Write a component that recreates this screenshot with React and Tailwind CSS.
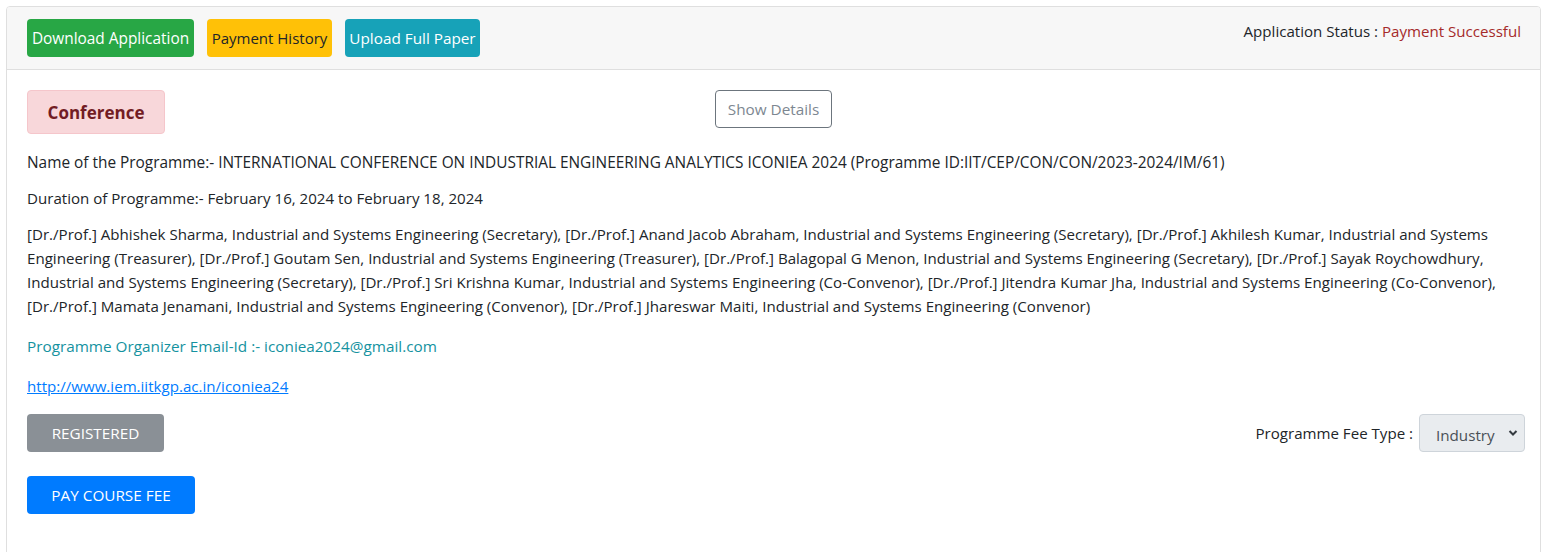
import React from "react";

const FONT = { fontFamily: '"Open Sans", "Noto Sans", Arial, sans-serif' };

export default function App() {
  return (
    <div className="bg-white w-[1541px] h-[552px] overflow-hidden pt-[6px] pl-[6px] text-[#212529]" style={FONT}>
      <div className="w-[1535px] h-[560px] border border-[#dfdfdf] rounded-[4px] overflow-hidden">
        <div className="bg-[#f7f7f7] border-b border-[#dfdfdf] h-[63px] pl-[20px] pr-[19px] pt-[12px] flex items-start justify-between">
          <div className="flex gap-[13px]">
            <button className="h-[38px] w-[167px] pt-[1px] rounded-[4px] bg-[#28a745] text-white text-[15.4px]">Download Application</button>
            <button className="h-[38px] w-[125px] pt-[1px] rounded-[4px] bg-[#ffc107] text-[#212529] text-[15px]">Payment History</button>
            <button className="h-[38px] w-[135px] pt-[1px] rounded-[4px] bg-[#17a2b8] text-white text-[15.3px]">Upload Full Paper</button>
          </div>
          <div className="text-[15.1px] leading-[24px]">
            Application Status : <span className="text-[#a52a2a]">Payment Successful</span>
          </div>
        </div>
        <div className="px-[20px] pt-[20px] text-[15.1px] leading-[24px]">
          <div className="relative h-[44px]">
            <div className="inline-flex items-center h-[44px] w-[138px] justify-center pt-[1px] rounded-[4px] bg-[#f8d7da] border border-[#f5c6cb] text-[#721c24] font-bold text-[17px]">Conference</div>
            <div className="absolute left-0 right-0 top-0 flex justify-center">
              <button className="h-[38px] w-[117px] rounded-[4px] border border-[#6c757d] text-[#7d8791] text-[15.3px]">Show Details</button>
            </div>
          </div>
          <p className="mt-[17px] whitespace-nowrap text-[15.4px]">Name of the Programme:- INTERNATIONAL CONFERENCE ON INDUSTRIAL ENGINEERING ANALYTICS ICONIEA 2024 (Programme ID:IIT/CEP/CON/CON/2023-2024/IM/61)</p>
          <p className="mt-[11px] whitespace-nowrap">Duration of Programme:- February 16, 2024 to February 18, 2024</p>
          <p className="mt-[12px] whitespace-nowrap">
            [Dr./Prof.] Abhishek Sharma, Industrial and Systems Engineering (Secretary), [Dr./Prof.] Anand Jacob Abraham, Industrial and Systems Engineering (Secretary), [Dr./Prof.] Akhilesh Kumar, Industrial and Systems<br />
            Engineering (Treasurer), [Dr./Prof.] Goutam Sen, Industrial and Systems Engineering (Treasurer), [Dr./Prof.] Balagopal G Menon, Industrial and Systems Engineering (Secretary), [Dr./Prof.] Sayak Roychowdhury,<br />
            Industrial and Systems Engineering (Secretary), [Dr./Prof.] Sri Krishna Kumar, Industrial and Systems Engineering (Co-Convenor), [Dr./Prof.] Jitendra Kumar Jha, Industrial and Systems Engineering (Co-Convenor),<br />
            [Dr./Prof.] Mamata Jenamani, Industrial and Systems Engineering (Convenor), [Dr./Prof.] Jhareswar Maiti, Industrial and Systems Engineering (Convenor)
          </p>
          <p className="mt-[16px] text-[#1592a0] text-[15.3px]">Programme Organizer Email-Id :- iconiea2024@gmail.com</p>
          <p className="mt-[16px]"><a href="#" className="text-[#007bff] underline">http://www.iem.iitkgp.ac.in/iconiea24</a></p>
          <div className="mt-[16px] flex items-center justify-between mr-[-5px]">
            <button className="h-[38px] w-[137px] rounded-[4px] bg-[#8a9096] text-white text-[15.3px]">REGISTERED</button>
            <div className="flex items-center gap-[6px]">
              <span className="mt-[-1px] text-[15.1px]">Programme Fee Type :</span>
              <div className="relative">
                <select className="appearance-none h-[38px] w-[106px] rounded-[4px] bg-[#e9ecef] border border-[#ced4da] text-[#495057] text-[15.2px] pl-[16px] pt-[4px]" defaultValue="Industry">
                  <option>Industry</option>
                </select>
                <svg className="absolute right-[7px] top-[15px] pointer-events-none" width="10" height="8" viewBox="0 0 10 8">
                  <path d="M1.5 2 L5 5.5 L8.5 2" fill="none" stroke="#343a40" strokeWidth="2" />
                </svg>
              </div>
            </div>
          </div>
          <button className="mt-[24px] h-[38px] w-[168px] rounded-[4px] bg-[#007bff] text-white text-[15.3px]">PAY COURSE FEE</button>
        </div>
      </div>
    </div>
  );
}
